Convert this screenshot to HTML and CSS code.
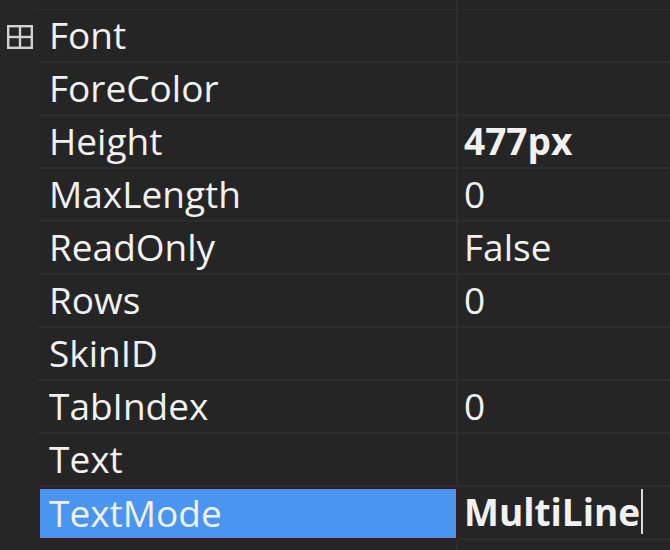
FILE: index.html
```html
<!DOCTYPE html>
<html>
<head>
<meta charset="utf-8">
<link rel="stylesheet" href="styles.css">
</head>
<body>
<div class="grid">
  <div class="row partial"><div class="gutter"></div><div class="name"></div><div class="value"></div></div>
  <div class="row">
    <div class="gutter"><svg class="expander" width="26" height="24" viewBox="0 0 26 24"><rect x="1.2" y="1.2" width="23.6" height="21.6" fill="none" stroke="#d2d2d2" stroke-width="2.4"/><line x1="13" y1="1" x2="13" y2="23" stroke="#d2d2d2" stroke-width="2.4"/><line x1="1" y1="12" x2="25" y2="12" stroke="#d2d2d2" stroke-width="2.4"/></svg></div>
    <div class="name">Font</div><div class="value"></div>
  </div>
  <div class="row"><div class="gutter"></div><div class="name">ForeColor</div><div class="value"></div></div>
  <div class="row"><div class="gutter"></div><div class="name">Height</div><div class="value bold">477px</div></div>
  <div class="row"><div class="gutter"></div><div class="name">MaxLength</div><div class="value">0</div></div>
  <div class="row"><div class="gutter"></div><div class="name">ReadOnly</div><div class="value">False</div></div>
  <div class="row"><div class="gutter"></div><div class="name">Rows</div><div class="value">0</div></div>
  <div class="row"><div class="gutter"></div><div class="name">SkinID</div><div class="value"></div></div>
  <div class="row"><div class="gutter"></div><div class="name">TabIndex</div><div class="value">0</div></div>
  <div class="row"><div class="gutter"></div><div class="name">Text</div><div class="value"></div></div>
  <div class="row selected"><div class="gutter"></div><div class="name">TextMode</div><div class="value bold">MultiLine<span class="caret"></span></div></div>
  <div class="row"><div class="gutter"></div><div class="name">ToolTip</div><div class="value"></div></div>
</div>
</body>
</html>
```
FILE: styles.css
```css
html, body {
  margin: 0;
  padding: 0;
  background: #252526;
  overflow: hidden;
}
.grid {
  display: flex;
  flex-direction: column;
  width: 670px;
  height: 550px;
  overflow: hidden;
  font-family: "Open Sans", "Noto Sans", sans-serif;
  font-size: 37px;
  color: #f1f1f1;
}
.row {
  display: grid;
  grid-template-columns: 38px 420px 1fr;
  height: 53px;
  flex: 0 0 53px;
}
.row.partial {
  height: 10px;
  flex: 0 0 10px;
}
.gutter {
  background: #262627;
  display: flex;
  align-items: center;
  padding-left: 7px;
}
.name {
  border-bottom: 2px solid #2d2d2f;
  border-right: 2px solid #2d2d2f;
  display: flex;
  align-items: center;
  padding-left: 11px;
  padding-bottom: 2px;
  white-space: nowrap;
  line-height: 1;
}
.value {
  border-bottom: 2px solid #2d2d2f;
  display: flex;
  align-items: center;
  padding-left: 6px;
  padding-bottom: 2px;
  white-space: nowrap;
  line-height: 1;
}
.partial .name, .partial .value { border-bottom-width: 1px; padding-bottom: 0; }
.bold { font-weight: 700; }
.selected .name {
  background: #4a95ef;
  border: 2px solid #3a1c1e;
  padding-left: 9px;
}
.caret {
  display: inline-block;
  width: 2px;
  height: 45px;
  background: #d8d8d8;
  margin-left: 1px;
}
```
